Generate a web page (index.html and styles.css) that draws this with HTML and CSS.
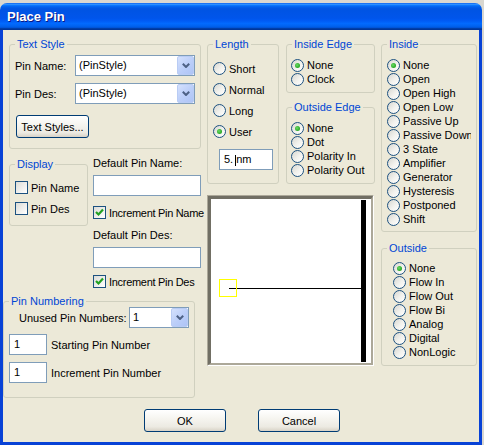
FILE: index.html
```html
<!DOCTYPE html>
<html>
<head>
<meta charset="utf-8">
<title>Place Pin</title>
<link rel="stylesheet" href="styles.css">
</head>
<body>
<div class="window">
  <div class="titlebar"><span class="title">Place Pin</span></div>
  <div class="client">
    <div class="top">
      <div class="col-a">
        <div class="group g-textstyle">
          <div class="legend">Text Style</div>
          <div class="gbody pl5">
            <div class="row mt4">
              <span class="lbl60">Pin Name:</span>
              <div class="combo w120"><span class="combo-text">(PinStyle)</span><span class="combo-btn"><svg width="8" height="5" viewBox="0 0 8 5"><polyline points="0.8,0.8 4,4 7.2,0.8" fill="none" stroke="#4D6185" stroke-width="2"/></svg></span></div>
            </div>
            <div class="row mt7">
              <span class="lbl60">Pin Des:</span>
              <div class="combo w120"><span class="combo-text">(PinStyle)</span><span class="combo-btn"><svg width="8" height="5" viewBox="0 0 8 5"><polyline points="0.8,0.8 4,4 7.2,0.8" fill="none" stroke="#4D6185" stroke-width="2"/></svg></span></div>
            </div>
            <button class="btn btn-ts">Text Styles...</button>
          </div>
        </div>

        <div class="row2">
          <div class="group g-display">
            <div class="legend">Display</div>
            <div class="gbody pl5">
              <div class="opt h21 mt6"><span class="check"></span><span class="olabel">Pin Name</span></div>
              <div class="opt h21"><span class="check"></span><span class="olabel">Pin Des</span></div>
            </div>
          </div>
          <div class="defaults">
            <div class="dlabel">Default Pin Name:</div>
            <div class="field dfield"></div>
            <div class="crow mt10"><span class="check"><svg width="11" height="11" viewBox="0 0 11 11"><polyline points="2,5 4.5,7.5 9,2.5" fill="none" stroke="#21A121" stroke-width="2.2"/></svg></span><span class="olabel tight">Increment Pin Name</span></div>
            <div class="dlabel mt9">Default Pin Des:</div>
            <div class="field dfield"></div>
            <div class="crow mt7"><span class="check"><svg width="11" height="11" viewBox="0 0 11 11"><polyline points="2,5 4.5,7.5 9,2.5" fill="none" stroke="#21A121" stroke-width="2.2"/></svg></span><span class="olabel tight">Increment Pin Des</span></div>
          </div>
        </div>

        <div class="group g-pinnum">
          <div class="legend">Pin Numbering</div>
          <div class="gbody pl5">
            <div class="row pn-row1">
              <span class="pn-label">Unused Pin Numbers:</span>
              <div class="combo w60"><span class="combo-text">1</span><span class="combo-btn"><svg width="8" height="5" viewBox="0 0 8 5"><polyline points="0.8,0.8 4,4 7.2,0.8" fill="none" stroke="#4D6185" stroke-width="2"/></svg></span></div>
            </div>
            <div class="row mt6"><div class="field pn-field">1</div><span class="pn-text">Starting Pin Number</span></div>
            <div class="row mt7"><div class="field pn-field">1</div><span class="pn-text">Increment Pin Number</span></div>
          </div>
        </div>
      </div>

      <div class="col-b">
        <div class="b-top">
          <div class="group g-length">
            <div class="legend">Length</div>
            <div class="gbody pl5">
              <div class="opt h21 mt7"><span class="radio"></span><span class="olabel">Short</span></div>
              <div class="opt h21"><span class="radio"></span><span class="olabel">Normal</span></div>
              <div class="opt h21"><span class="radio"></span><span class="olabel">Long</span></div>
              <div class="opt h21"><span class="radio on"></span><span class="olabel">User</span></div>
              <div class="field len-field">5.<span class="caret"></span>nm</div>
            </div>
          </div>
          <div class="edges">
            <div class="group g-iedge">
              <div class="legend">Inside Edge</div>
              <div class="gbody pl4">
                <div class="opt mt7"><span class="radio on"></span><span class="olabel">None</span></div>
                <div class="opt"><span class="radio"></span><span class="olabel">Clock</span></div>
              </div>
            </div>
            <div class="group g-oedge">
              <div class="legend">Outside Edge</div>
              <div class="gbody pl4">
                <div class="opt mt7"><span class="radio on"></span><span class="olabel">None</span></div>
                <div class="opt"><span class="radio"></span><span class="olabel">Dot</span></div>
                <div class="opt"><span class="radio"></span><span class="olabel">Polarity In</span></div>
                <div class="opt"><span class="radio"></span><span class="olabel">Polarity Out</span></div>
              </div>
            </div>
          </div>
        </div>
        <div class="preview">
          <div class="preview-in">
            <svg width="160" height="164" viewBox="0 0 160 164">
              <rect x="150" y="1" width="5" height="162" fill="#000"/>
              <rect x="18" y="89" width="132" height="1" fill="#000"/>
              <rect x="8.5" y="80.5" width="17" height="17" fill="none" stroke="#FFFF00" stroke-width="1"/>
            </svg>
          </div>
        </div>
      </div>

      <div class="col-c">
        <div class="group g-inside">
          <div class="legend">Inside</div>
          <div class="gbody pl5">
            <div class="opt mt7"><span class="radio on"></span><span class="olabel clip">None</span></div>
            <div class="opt"><span class="radio"></span><span class="olabel clip">Open</span></div>
            <div class="opt"><span class="radio"></span><span class="olabel clip">Open High</span></div>
            <div class="opt"><span class="radio"></span><span class="olabel clip">Open Low</span></div>
            <div class="opt"><span class="radio"></span><span class="olabel clip">Passive Up</span></div>
            <div class="opt"><span class="radio"></span><span class="olabel clip">Passive Down</span></div>
            <div class="opt"><span class="radio"></span><span class="olabel clip">3 State</span></div>
            <div class="opt"><span class="radio"></span><span class="olabel clip">Amplifier</span></div>
            <div class="opt"><span class="radio"></span><span class="olabel clip">Generator</span></div>
            <div class="opt"><span class="radio"></span><span class="olabel clip">Hysteresis</span></div>
            <div class="opt"><span class="radio"></span><span class="olabel clip">Postponed</span></div>
            <div class="opt"><span class="radio"></span><span class="olabel clip">Shift</span></div>
          </div>
        </div>
        <div class="group g-outside">
          <div class="legend">Outside</div>
          <div class="gbody pl11">
            <div class="opt mt6"><span class="radio on"></span><span class="olabel">None</span></div>
            <div class="opt"><span class="radio"></span><span class="olabel">Flow In</span></div>
            <div class="opt"><span class="radio"></span><span class="olabel">Flow Out</span></div>
            <div class="opt"><span class="radio"></span><span class="olabel">Flow Bi</span></div>
            <div class="opt"><span class="radio"></span><span class="olabel">Analog</span></div>
            <div class="opt"><span class="radio"></span><span class="olabel">Digital</span></div>
            <div class="opt"><span class="radio"></span><span class="olabel">NonLogic</span></div>
          </div>
        </div>
      </div>
    </div>

    <div class="buttons">
      <button class="btn btn-main">OK</button>
      <button class="btn btn-main">Cancel</button>
    </div>
  </div>
</div>
</body>
</html>
```

FILE: styles.css
```css
* { box-sizing: border-box; }

body {
  margin: 0;
  background: #D9D7D0;
  font-family: "Liberation Sans", Arial, sans-serif;
  font-size: 11px;
  color: #000;
}

.window {
  width: 482px;
  height: 442px;
  margin-top: 3px;
  display: flex;
  flex-direction: column;
}

.titlebar {
  height: 27px;
  flex: none;
  border-radius: 7px 7px 0 0;
  padding-left: 7px;
  display: flex;
  align-items: center;
  background: linear-gradient(to bottom,
    #0058EE 0%, #3593FF 4%, #288EFF 6%, #127DFF 8%, #036FFC 10%,
    #0262EE 14%, #0057E5 20%, #0054E3 24%, #0055EB 56%, #005BF5 66%,
    #026AFE 76%, #0062EF 86%, #0052D6 92%, #0040AB 94%, #003092 100%);
}

.title {
  color: #fff;
  font-weight: bold;
  font-size: 13px;
  text-shadow: 1px 1px 0 #0A1883;
}

.client {
  flex: 1;
  background: #ECE9D8;
  border: 3px solid #0842D6;
  border-top: 0;
  padding-top: 14px;
  display: flex;
  flex-direction: column;
}

.top { display: flex; align-items: flex-start; }
.col-a { width: 198px; flex: none; }
.col-b { width: 168px; margin-left: 6px; flex: none; }
.col-c { width: 96px; margin-left: 6px; flex: none; }

.group {
  border: 1px solid #D0D0BF;
  border-radius: 3px;
}

.legend {
  width: max-content;
  height: 13px;
  line-height: 13px;
  margin: -7px 0 0 5px;
  padding: 0 2px;
  background: #ECE9D8;
  color: #0046D5;
}

.pl4 { padding-left: 4px; }
.pl5 { padding-left: 5px; }
.pl11 { padding-left: 11px; }
.mt4 { margin-top: 4px; }
.mt6 { margin-top: 6px; }
.mt7 { margin-top: 7px; }
.mt9 { margin-top: 9px; }
.mt10 { margin-top: 10px; }

.row { display: flex; align-items: center; }

.lbl60 { width: 60px; flex: none; }

.combo {
  display: flex;
  height: 21px;
  border: 1px solid #7F9DB9;
  background: #fff;
  flex: none;
}
.w120 { width: 120px; }
.w60 { width: 60px; }
.combo-text {
  flex: 1;
  padding-left: 3px;
  line-height: 19px;
  white-space: nowrap;
}
.combo-btn {
  width: 17px;
  height: 19px;
  flex: none;
  border: 1px solid #B9CCF4;
  border-radius: 2px;
  background: linear-gradient(135deg, #D4E1FD 0%, #BCCFF9 50%, #AEC4F6 100%);
  display: flex;
  align-items: center;
  justify-content: center;
}

.field {
  height: 21px;
  border: 1px solid #7F9DB9;
  background: #fff;
  padding-left: 4px;
  line-height: 19px;
  white-space: nowrap;
}

.btn {
  height: 23px;
  border: 1px solid #003C74;
  border-radius: 3px;
  background: linear-gradient(to bottom, #FFFFFF 0%, #F6F5F0 40%, #ECEAE2 80%, #D8D2C6 100%);
  font: inherit;
  color: #000;
  padding: 0;
  display: flex;
  align-items: center;
  justify-content: center;
}
.btn-ts { width: 73px; margin: 11px 0 0 1px; }
.btn-main { width: 82px; }

.opt {
  display: flex;
  align-items: center;
  height: 14px;
  white-space: nowrap;
}
.h21 { height: 21px; }
.olabel { margin-left: 3px; }
.clip { width: 68px; overflow: hidden; white-space: nowrap; }
.tight { letter-spacing: -0.3px; }

.radio {
  width: 13px;
  height: 13px;
  flex: none;
  border-radius: 50%;
  border: 1px solid #1C5180;
  background: linear-gradient(135deg, #D6D6D0 0%, #F2F2EE 55%, #FFFFFF 100%);
  display: flex;
  align-items: center;
  justify-content: center;
}
.radio.on::after {
  content: "";
  width: 5px;
  height: 5px;
  border-radius: 50%;
  background: radial-gradient(circle at 40% 40%, #6BDA66 0%, #2FAE2C 60%, #1E961E 100%);
}

.check {
  width: 13px;
  height: 13px;
  flex: none;
  border: 1px solid #1C5180;
  background: linear-gradient(135deg, #DCDCD7 0%, #FFFFFF 100%);
  display: flex;
  align-items: center;
  justify-content: center;
}

.row2 { display: flex; align-items: flex-start; margin-top: 7px; }
.g-textstyle { margin-left: 6px; width: 192px; height: 105px; }
.g-display { margin: 8px 0 0 6px; width: 79px; height: 62px; flex: none; }
.defaults { margin-left: 5px; width: 108px; flex: none; }
.dlabel { height: 14px; line-height: 14px; white-space: nowrap; }
.dfield { width: 108px; margin-top: 5px; }
.crow {
  display: flex;
  align-items: center;
  height: 13px;
  white-space: nowrap;
}

.g-pinnum { margin-top: 13px; width: 192px; height: 97px; }
.pn-row1 { margin-top: -1px; }
.pn-label { width: 110px; margin-left: 10px; flex: none; }
.pn-field { width: 38px; flex: none; }
.pn-text { margin-left: 4px; white-space: nowrap; }

.b-top { display: flex; align-items: flex-start; }
.g-length { width: 72px; height: 140px; flex: none; }
.len-field { width: 54px; margin: 7px 0 0 6px; }
.caret {
  display: inline-block;
  width: 1px;
  height: 11px;
  background: #000;
  vertical-align: middle;
  margin: 0 0 0 2px;
}
.edges { margin-left: 7px; width: 89px; flex: none; }
.g-iedge { height: 49px; }
.g-oedge { margin-top: 14px; height: 77px; }

.preview {
  margin-top: 11px;
  width: 167px;
  height: 171px;
  border: 1px solid;
  border-color: #ACA899 #FFFFFF #FFFFFF #ACA899;
}
.preview-in {
  height: 100%;
  border-style: solid;
  border-width: 3px 2px 2px 3px;
  border-color: #716F64 #ACA899 #ACA899 #716F64;
  background: #fff;
}
.preview-in svg { display: block; }

.g-inside { height: 188px; }
.g-outside { margin-top: 16px; height: 118px; }

.buttons {
  display: flex;
  justify-content: center;
  gap: 32px;
  margin-top: 11px;
  padding-left: 2px;
}
```
